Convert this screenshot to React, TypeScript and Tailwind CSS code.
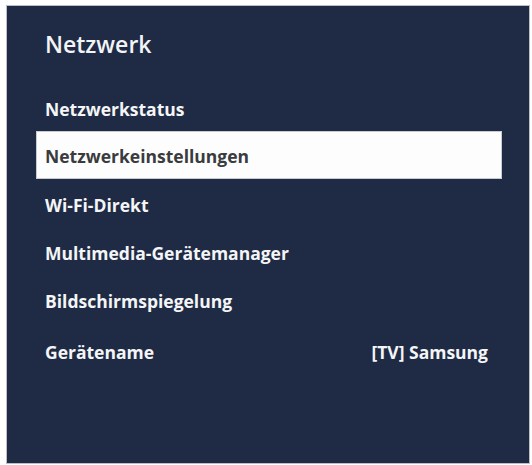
import React from "react";

type Item = { label: string; value?: string; active?: boolean };

const items: Item[] = [
  { label: "Netzwerkstatus" },
  { label: "Netzwerkeinstellungen", active: true },
  { label: "Wi-Fi-Direkt" },
  { label: "Multimedia-Gerätemanager" },
  { label: "Bildschirmspiegelung" },
  { label: "Gerätename", value: "[TV] Samsung" },
];

const App = () => {
  return (
    <div className="h-[465px] w-[532px] bg-white pl-[6px] pt-[5px] font-['Open_Sans',sans-serif]">
      <div className="flex h-[459px] w-[524px] flex-col border border-[#b9bec8] bg-[#1f2a44]">
        <h1 className="pl-[38px] pt-[23px] text-[23px] font-semibold leading-[31px] text-[#f2f4f7]">
          Netzwerk
        </h1>
        <ul className="mt-[23px] flex flex-col pr-[27px] pl-[29px]">
          {items.map((item, i) => (
            <li
              key={item.label}
              className={
                item.active
                  ? "flex h-[48px] items-center justify-between border border-[#c8ccd2] bg-[#fdfdfd] pt-[3px] pl-[8px] pr-[14px] text-[17.5px] font-bold text-[#3a3b3d]"
                  : i === items.length - 1
                    ? "mt-[3px] flex h-[48px] items-center justify-between pt-[4px] pl-[9px] pr-[14px] text-[17.5px] font-bold text-[#f4f5f7]"
                    : "flex h-[48px] items-center justify-between pt-[4px] pl-[9px] pr-[14px] text-[17.5px] font-bold text-[#f4f5f7]"
              }
            >
              <span>{item.label}</span>
              {item.value && <span>{item.value}</span>}
            </li>
          ))}
        </ul>
      </div>
    </div>
  );
};

export default App;
